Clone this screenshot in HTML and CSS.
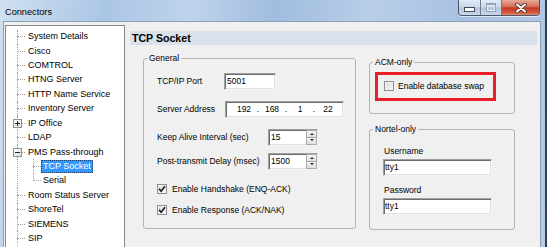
FILE: index.html
```html
<!DOCTYPE html>
<html lang="en">
<head>
  <meta charset="UTF-8">
  <meta name="viewport" content="width=device-width, initial-scale=1.0">
  <title>Connectors</title>
  <link rel="stylesheet" href="styles.css">
</head>
<body>
  <div class="window">
    <!-- Title bar -->
    <div class="titlebar">
      <span class="title">Connectors</span>
      <div class="caption-buttons">
        <span class="cap-btn cap-min"><span class="min-glyph"></span></span>
        <span class="cap-btn cap-max"><span class="max-glyph"></span></span>
        <span class="cap-btn cap-close">
          <svg width="14" height="10" viewBox="0 0 14 10">
            <path d="M3 1.5 L11 8.5 M11 1.5 L3 8.5" stroke="#3b2a2a" stroke-width="3.6" stroke-linecap="round"/>
            <path d="M3 1.5 L11 8.5 M11 1.5 L3 8.5" stroke="#fff" stroke-width="2" stroke-linecap="round"/>
          </svg>
        </span>
      </div>
    </div>

    <div class="client">
      <!-- Connector tree -->
      <div class="tree">
        <ul class="tree-list">
          <li><div class="node"><span class="node-label">System Details</span></div></li>
          <li><div class="node"><span class="node-label">Cisco</span></div></li>
          <li><div class="node"><span class="node-label">COMTROL</span></div></li>
          <li><div class="node"><span class="node-label">HTNG Server</span></div></li>
          <li><div class="node"><span class="node-label">HTTP Name Service</span></div></li>
          <li><div class="node"><span class="node-label">Inventory Server</span></div></li>
          <li class="collapsed"><div class="node"><span class="expander"></span><span class="node-label">IP Office</span></div></li>
          <li><div class="node"><span class="node-label">LDAP</span></div></li>
          <li class="expanded">
            <div class="node"><span class="expander"></span><span class="node-label">PMS Pass-through</span></div>
            <ul class="tree-list children">
              <li><div class="node"><span class="node-label selected">TCP Socket</span></div></li>
              <li><div class="node"><span class="node-label">Serial</span></div></li>
            </ul>
          </li>
          <li><div class="node"><span class="node-label">Room Status Server</span></div></li>
          <li><div class="node"><span class="node-label">ShoreTel</span></div></li>
          <li><div class="node"><span class="node-label">SIEMENS</span></div></li>
          <li class="last-visible"><div class="node"><span class="node-label">SIP</span></div></li>
        </ul>
      </div>

      <!-- Settings pane -->
      <div class="pane">
        <div class="pane-header">TCP Socket</div>

        <div class="pane-body">
          <fieldset class="group general">
            <legend>General</legend>
            <div class="group-body">
              <div class="field-row">
                <label class="field-label port-label">TCP/IP Port</label>
                <div class="textbox port-box">5001</div>
              </div>
              <div class="field-row row-gap">
                <label class="field-label addr-label">Server Address</label>
                <div class="textbox ip-box">
                  <span class="octet">192</span><span class="dot">.</span>
                  <span class="octet">168</span><span class="dot">.</span>
                  <span class="octet">1</span><span class="dot">.</span>
                  <span class="octet">22</span>
                </div>
              </div>
              <div class="field-row row-gap">
                <label class="field-label spin-label">Keep Alive Interval (sec)</label>
                <div class="textbox spinner">
                  <span class="spin-value">15</span>
                  <span class="spin-buttons"><span class="spin-btn up"></span><span class="spin-btn down"></span></span>
                </div>
              </div>
              <div class="field-row row-gap-small">
                <label class="field-label spin-label">Post-transmit Delay (msec)</label>
                <div class="textbox spinner">
                  <span class="spin-value">1500</span>
                  <span class="spin-buttons"><span class="spin-btn up"></span><span class="spin-btn down"></span></span>
                </div>
              </div>
              <div class="check-row first-check">
                <span class="check checked">
                  <svg width="8" height="8" viewBox="0 0 8 8"><path d="M1 3.8 L3.1 6.2 L7 1.2" fill="none" stroke="#1c1c1c" stroke-width="1.6"/></svg>
                </span>
                <span class="check-text">Enable Handshake (ENQ-ACK)</span>
              </div>
              <div class="check-row">
                <span class="check checked">
                  <svg width="8" height="8" viewBox="0 0 8 8"><path d="M1 3.8 L3.1 6.2 L7 1.2" fill="none" stroke="#1c1c1c" stroke-width="1.6"/></svg>
                </span>
                <span class="check-text">Enable Response (ACK/NAK)</span>
              </div>
            </div>
          </fieldset>

          <div class="side">
            <fieldset class="group acm">
              <legend>ACM-only</legend>
              <div class="group-body">
                <div class="highlight-box">
                  <div class="check-row">
                    <span class="check"></span>
                    <span class="check-text">Enable database swap</span>
                  </div>
                </div>
              </div>
            </fieldset>

            <fieldset class="group nortel">
              <legend>Nortel-only</legend>
              <div class="group-body">
                <label class="field-label stacked user-label">Username</label>
                <div class="textbox wide-box">tty1</div>
                <label class="field-label stacked pass-label">Password</label>
                <div class="textbox wide-box">tty1</div>
              </div>
            </fieldset>
          </div>
        </div>
      </div>
    </div>
  </div>
</body>
</html>
```

FILE: styles.css
```css
body {
  margin: 0;
  padding: 0;
  width: 547px;
  height: 247px;
  overflow: hidden;
  font-family: 'Liberation Sans', Arial, sans-serif;
  color: #000;
  background: #f0f0f0;
}

/* Window frame */
.window {
  height: 247px;
  display: flex;
  flex-direction: column;
  padding: 0 6px 0 3px;
  box-sizing: border-box;
  background: linear-gradient(100deg, #d0e0f2 0%, #abc6e5 18%, #bfd3eb 33%, #a0bcdf 47%, #b9cee8 63%, #a7c1e2 80%, #b5cbe6 100%);
  box-shadow: inset -2px 0 #2e3e52;
}

.titlebar {
  height: 21px;
  flex: none;
  display: flex;
  justify-content: space-between;
  align-items: flex-start;
  padding-right: 1px;
}

.title {
  font-size: 9.2px;
  line-height: 12px;
  margin: 6px 0 0 2px;
}

.caption-buttons {
  display: flex;
  height: 15px;
  border: 1px solid #4a586b;
  border-top: none;
  border-radius: 0 0 4px 4px;
  overflow: hidden;
  box-shadow: 0 1px 0 rgba(255, 255, 255, 0.6);
}

.cap-btn {
  display: flex;
  justify-content: center;
  align-items: center;
  height: 15px;
  box-sizing: border-box;
}

.cap-min,
.cap-max {
  width: 22px;
  background: linear-gradient(#e2eaf4, #c9d7e8 48%, #b4c6dc 52%, #cad8ea);
  border-right: 1px solid #6f7d90;
}

.cap-max {
  width: 21px;
}

.min-glyph {
  width: 9px;
  height: 3px;
  margin-top: 4px;
  background: #fff;
  border: 1px solid #3f4b5b;
}

.max-glyph {
  width: 8px;
  height: 6px;
  border: 1px solid #94a4b8;
  border-top-width: 2px;
  background: transparent;
  box-shadow: inset 0 0 0 1px #e6edf5;
}

.cap-close {
  width: 37px;
  background: linear-gradient(#e9a898, #d66d57 45%, #c23a22 52%, #d15a3e 85%, #e48c6d);
}

/* Client area */
.client {
  flex: 1;
  display: flex;
  background: #f0f0f0;
  border: 1px solid #8d9fb5;
  border-bottom: none;
  padding: 3px 0 0 1px;
  min-height: 0;
}

/* Tree */
.tree {
  width: 120px;
  flex: none;
  box-sizing: border-box;
  background: #fff;
  border: 1px solid #828790;
  border-bottom: none;
  padding-top: 3.5px;
  overflow: hidden;
  font-size: 9px;
}

.tree-list {
  list-style: none;
  margin: 0;
  padding: 0 0 0 11px;
}

.tree-list li {
  position: relative;
}

.tree-list li::before {
  content: '';
  position: absolute;
  left: 0;
  top: 0;
  bottom: 0;
  border-left: 1px dotted #a0a0a0;
}

/* the list goes on below the visible edge */
.tree-list .last-visible::before {
  bottom: -12px;
}

.tree-list .children {
  padding-left: 16px;
}

.children li:last-child::before {
  bottom: 50%;
}

.node {
  height: 14.43px;
  display: flex;
  align-items: center;
}

.node::before {
  content: '';
  flex: none;
  width: 8px;
  border-top: 1px dotted #a0a0a0;
  margin-right: 1px;
}

.children .node::before {
  margin-right: 0;
}

.node-label {
  padding: 0 2px;
  line-height: 13px;
  white-space: nowrap;
}

.node-label.selected {
  background: #3399ff;
  color: #fff;
  outline: 1px dotted #1a3d6b;
  outline-offset: -1px;
}

.expander {
  position: absolute;
  left: -4px;
  top: 3px;
  width: 9px;
  height: 9px;
  box-sizing: border-box;
  border: 1px solid #919191;
  background: linear-gradient(135deg, #fff, #dcdcdc);
  z-index: 1;
}

.expander::before {
  content: '';
  position: absolute;
  left: 1px;
  top: 3px;
  width: 5px;
  height: 1px;
  background: #222;
}

.collapsed > .node .expander::after {
  content: '';
  position: absolute;
  left: 3px;
  top: 1px;
  width: 1px;
  height: 5px;
  background: #222;
}

/* Settings pane */
.pane {
  flex: 1;
  margin: 6px 3px 0 5px;
  min-width: 0;
}

.pane-header {
  height: 14px;
  line-height: 14px;
  padding-left: 2px;
  font-size: 10.6px;
  font-weight: bold;
  background: #d9e1ea;
}

.pane-body {
  display: flex;
  align-items: flex-start;
  gap: 13px;
  padding-left: 13px;
  font-size: 8.5px;
}

.group {
  margin: 0;
  padding: 0;
  min-width: 0;
  box-sizing: border-box;
  border: 1px solid #b4b4b4;
  border-radius: 3px;
}

.group legend {
  margin-left: 3px;
  padding: 0 2px;
  line-height: 11px;
}

.general {
  width: 213px;
  height: 176.5px;
  margin-top: 7.5px;
}

.general .group-body {
  padding: 9.5px 0 0 13px;
}

.side {
  width: 146px;
  display: flex;
  flex-direction: column;
}

.acm {
  height: 56.5px;
  margin-top: 12px;
}

.acm .group-body {
  padding: 3.8px 0 0 5px;
}

.nortel {
  height: 105.5px;
  margin-top: 10.8px;
}

.nortel .group-body {
  padding: 11px 0 0 13px;
}

/* Form rows */
.field-row {
  display: flex;
  align-items: center;
  height: 17px;
}

.row-gap {
  margin-top: 11px;
}

.row-gap-small {
  margin-top: 7px;
}

.field-label {
  line-height: 11px;
  white-space: nowrap;
}

.port-label {
  width: 67px;
}

.addr-label {
  width: 68px;
}

.spin-label {
  width: 111px;
}

.textbox {
  height: 17px;
  box-sizing: border-box;
  background: #fff;
  border: 1px solid;
  border-color: #a0a0a0 #f4f4f4 #f4f4f4 #a0a0a0;
  box-shadow: inset 1px 1px #6d6d6d, inset -1px -1px #e2e2e2;
  line-height: 15px;
  padding-left: 2px;
  white-space: nowrap;
}

.port-box {
  width: 52px;
}

.ip-box {
  width: 119px;
  display: flex;
  padding-left: 8px;
}

.octet {
  width: 20px;
  text-align: center;
}

.dot {
  width: 8px;
  text-align: center;
}

.spinner {
  width: 50px;
  display: flex;
  align-items: stretch;
}

.spin-value {
  flex: 1;
}

.spin-buttons {
  width: 11px;
  display: flex;
  flex-direction: column;
}

.spin-btn {
  flex: 1;
  position: relative;
  border: 1px solid #a9a9a9;
  background: linear-gradient(#f6f6f6, #dedede);
}

.spin-btn.down {
  border-top: none;
}

.spin-btn::after {
  content: '';
  position: absolute;
  left: 3px;
  top: 2px;
  border-left: 2px solid transparent;
  border-right: 2px solid transparent;
}

.spin-btn.up::after {
  border-bottom: 2px solid #222;
}

.spin-btn.down::after {
  top: 1px;
  border-top: 2px solid #222;
}

/* Check boxes */
.check-row {
  display: flex;
  align-items: center;
  height: 14px;
  margin-top: 7px;
}

.first-check {
  margin-top: 12px;
}

.check {
  width: 10px;
  height: 10px;
  flex: none;
  box-sizing: border-box;
  border: 1px solid #8e8f8f;
  background: linear-gradient(135deg, #d8d8d8, #fafafa);
  box-shadow: inset 0 0 0 1px #f4f4f4;
  display: flex;
  justify-content: center;
  align-items: center;
  margin-right: 5px;
}

.highlight-box {
  height: 29px;
  width: 121px;
  box-sizing: border-box;
  border: 3px solid #e8202a;
  padding-left: 6px;
  display: flex;
  align-items: center;
}

.highlight-box .check-row {
  margin-top: 0;
}

.highlight-box .check {
  margin-right: 4px;
}

/* Nortel fields */
.stacked {
  display: block;
  margin-left: 1px;
  margin-bottom: 1.5px;
}

.pass-label {
  margin-top: 9.5px;
}

.wide-box {
  width: 109px;
  padding-left: 1px;
}
```
